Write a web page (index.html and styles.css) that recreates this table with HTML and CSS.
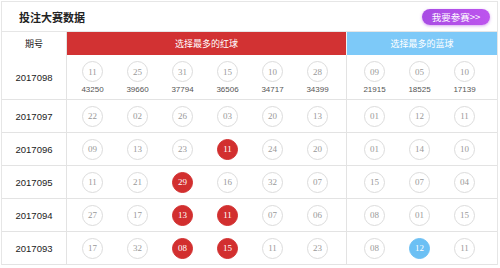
FILE: index.html
```html
<!DOCTYPE html>
<html lang="zh">
<head>
<meta charset="utf-8">
<title>投注大赛数据</title>
<link rel="stylesheet" href="styles.css">
</head>
<body>
<div class="board">
  <div class="titlebar">
    <span class="title">投注大赛数据</span>
    <a class="join">我要参赛&gt;&gt;</a>
  </div>
  <div class="row head">
    <div class="c-no">期号</div>
    <div class="c-red">选择最多的红球</div>
    <div class="c-blue">选择最多的蓝球</div>
  </div>

  <div class="row first">
    <div class="c-no">2017098</div>
    <div class="c-red balls">
      <div class="cell"><span class="ball">11</span><span class="cnt">43250</span></div>
      <div class="cell"><span class="ball">25</span><span class="cnt">39660</span></div>
      <div class="cell"><span class="ball">31</span><span class="cnt">37794</span></div>
      <div class="cell"><span class="ball">15</span><span class="cnt">36506</span></div>
      <div class="cell"><span class="ball">10</span><span class="cnt">34717</span></div>
      <div class="cell"><span class="ball">28</span><span class="cnt">34399</span></div>
    </div>
    <div class="c-blue balls">
      <div class="cell"><span class="ball">09</span><span class="cnt">21915</span></div>
      <div class="cell"><span class="ball">05</span><span class="cnt">18525</span></div>
      <div class="cell"><span class="ball">10</span><span class="cnt">17139</span></div>
    </div>
  </div>

  <div class="row">
    <div class="c-no">2017097</div>
    <div class="c-red balls">
      <div class="cell"><span class="ball">22</span></div>
      <div class="cell"><span class="ball">02</span></div>
      <div class="cell"><span class="ball">26</span></div>
      <div class="cell"><span class="ball">03</span></div>
      <div class="cell"><span class="ball">20</span></div>
      <div class="cell"><span class="ball">13</span></div>
    </div>
    <div class="c-blue balls">
      <div class="cell"><span class="ball">01</span></div>
      <div class="cell"><span class="ball">12</span></div>
      <div class="cell"><span class="ball">11</span></div>
    </div>
  </div>

  <div class="row">
    <div class="c-no">2017096</div>
    <div class="c-red balls">
      <div class="cell"><span class="ball">09</span></div>
      <div class="cell"><span class="ball">13</span></div>
      <div class="cell"><span class="ball">23</span></div>
      <div class="cell"><span class="ball hit-red">11</span></div>
      <div class="cell"><span class="ball">24</span></div>
      <div class="cell"><span class="ball">20</span></div>
    </div>
    <div class="c-blue balls">
      <div class="cell"><span class="ball">01</span></div>
      <div class="cell"><span class="ball">14</span></div>
      <div class="cell"><span class="ball">10</span></div>
    </div>
  </div>

  <div class="row">
    <div class="c-no">2017095</div>
    <div class="c-red balls">
      <div class="cell"><span class="ball">11</span></div>
      <div class="cell"><span class="ball">21</span></div>
      <div class="cell"><span class="ball hit-red">29</span></div>
      <div class="cell"><span class="ball">16</span></div>
      <div class="cell"><span class="ball">32</span></div>
      <div class="cell"><span class="ball">07</span></div>
    </div>
    <div class="c-blue balls">
      <div class="cell"><span class="ball">15</span></div>
      <div class="cell"><span class="ball">07</span></div>
      <div class="cell"><span class="ball">04</span></div>
    </div>
  </div>

  <div class="row">
    <div class="c-no">2017094</div>
    <div class="c-red balls">
      <div class="cell"><span class="ball">27</span></div>
      <div class="cell"><span class="ball">17</span></div>
      <div class="cell"><span class="ball hit-red">13</span></div>
      <div class="cell"><span class="ball hit-red">11</span></div>
      <div class="cell"><span class="ball">07</span></div>
      <div class="cell"><span class="ball">06</span></div>
    </div>
    <div class="c-blue balls">
      <div class="cell"><span class="ball">08</span></div>
      <div class="cell"><span class="ball">01</span></div>
      <div class="cell"><span class="ball">15</span></div>
    </div>
  </div>

  <div class="row">
    <div class="c-no">2017093</div>
    <div class="c-red balls">
      <div class="cell"><span class="ball">17</span></div>
      <div class="cell"><span class="ball">32</span></div>
      <div class="cell"><span class="ball hit-red">08</span></div>
      <div class="cell"><span class="ball hit-red">15</span></div>
      <div class="cell"><span class="ball">11</span></div>
      <div class="cell"><span class="ball">23</span></div>
    </div>
    <div class="c-blue balls">
      <div class="cell"><span class="ball">08</span></div>
      <div class="cell"><span class="ball hit-blue">12</span></div>
      <div class="cell"><span class="ball">11</span></div>
    </div>
  </div>
</div>
</body>
</html>
```

FILE: styles.css
```css
* { box-sizing: border-box; }
html, body { margin: 0; padding: 0; background: #fff; }
body {
  font-family: "Liberation Sans", "Noto Sans CJK SC", sans-serif;
  color: #333;
  overflow: hidden;
}
.board {
  margin: 1px 2px 0 1px;
  border: 1px solid #e6e6e6;
  border-bottom: none;
}
.titlebar {
  height: 30px;
  display: flex;
  align-items: center;
  justify-content: space-between;
  padding: 0 7px 0 17px;
  border-bottom: 1px solid #e6e6e6;
}
.title {
  font-family: "Noto Sans CJK SC", sans-serif;
  font-weight: bold;
  font-size: 11px;
  color: #222;
}
.join {
  display: flex;
  align-items: center;
  justify-content: center;
  width: 68px;
  height: 16px;
  border-radius: 8px;
  background: linear-gradient(90deg, #a84ce4, #bd55ee);
  box-shadow: 0 1px 3px rgba(180, 80, 230, 0.5);
  color: #fff;
  font-family: "Noto Sans CJK SC", sans-serif;
  font-size: 9.5px;
  margin-top: 1px;
}
.row {
  display: grid;
  grid-template-columns: 65px 280px 150px;
  height: 33px;
  border-bottom: 1px solid #e3e3e3;
}
.row.first { height: 45px; }
.row.head {
  height: 23px;
  border-bottom: none;
}
.c-no {
  display: flex;
  align-items: center;
  justify-content: center;
  border-right: 1px solid #e3e3e3;
  font-size: 9.5px;
  color: #222;
}
.head .c-no {
  font-family: "Noto Sans CJK SC", sans-serif;
  font-size: 9px;
}
.head .c-red, .head .c-blue {
  display: flex;
  align-items: center;
  justify-content: center;
  font-family: "Noto Sans CJK SC", sans-serif;
  font-size: 9px;
  color: #fff;
}
.head .c-red { background: #d23233; border-right: 1px solid #f3f3f3; }
.head .c-blue { background: #7dc9f8; }
.c-red { border-right: 1px solid #e3e3e3; }
.balls {
  display: flex;
  align-items: center;
}
.c-red.balls { padding-left: 3px; }
.c-blue.balls { padding-left: 5px; }
.cell {
  width: 45px;
  display: flex;
  flex-direction: column;
  align-items: center;
  gap: 3px;
}
.first .cell { margin-top: 2px; }
.ball {
  width: 21px;
  height: 21px;
  border-radius: 50%;
  border: 1px solid #dcdcdc;
  display: flex;
  align-items: center;
  justify-content: center;
  font-family: "Liberation Serif", serif;
  font-size: 9px;
  color: #999;
}
.ball.hit-red { background: #d22f2f; border-color: #d22f2f; color: #fff; }
.ball.hit-blue { background: #6cc0f4; border-color: #6cc0f4; color: #fff; }
.cnt {
  font-size: 8px;
  line-height: 10px;
  color: #555;
}
```
